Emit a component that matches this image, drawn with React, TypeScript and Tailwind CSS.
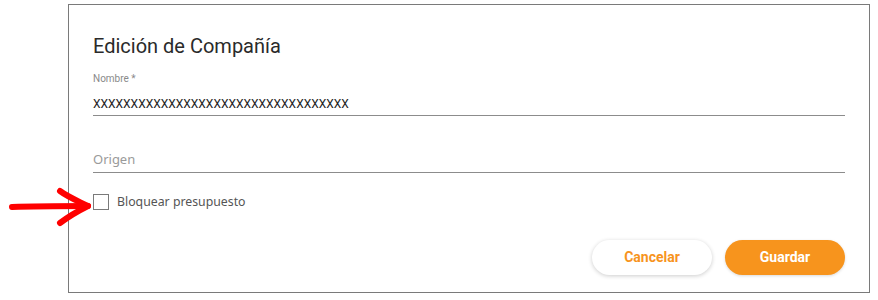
const App = (): JSX.Element => {
  return (
    <div className="relative w-[878px] h-[300px] bg-white" style={{ fontFamily: 'Roboto, "Liberation Sans", sans-serif' }}>
      <div className="ml-[68px] mt-[4px] w-[802px] h-[289px] border border-[#7a7a7a] bg-white">
        <div className="pl-[24px] pr-[24px] pt-[29px]">
          <h2 className="text-[20px] leading-[24px] text-[#2a2a2a]">Edición de Compañía</h2>

          <div className="mt-[15px]">
            <label className="block text-[10px] leading-[12px] text-[#8a8a8a]">Nombre *</label>
            <div className="mt-[10px] pb-[2px] border-b border-[#8c8c8c] text-[12px] leading-[18px] text-[#222]">
              XXXXXXXXXXXXXXXXXXXXXXXXXXXXXXXXXX
            </div>
          </div>

          <div className="mt-[33px] pb-[3px] border-b border-[#8c8c8c] text-[13px] leading-[20px] text-[#9a9a9a]" style={{ fontFamily: '"Noto Sans", "Open Sans", sans-serif' }}>
            Origen
          </div>

          <div className="mt-[20px] flex items-center gap-[8px]">
            <span className="w-[16px] h-[16px] border border-[#7a7a7a] bg-white" />
            <span className="text-[12.3px] leading-[18px] text-[#555]" style={{ fontFamily: '"Noto Sans", "Open Sans", sans-serif' }}>Bloquear presupuesto</span>
          </div>

          <div className="mt-[29px] flex justify-end gap-[13px]">
            <button className="w-[120px] h-[35px] rounded-full bg-white text-[#f7941d] text-[14px] font-bold shadow-[0_1px_4px_rgba(0,0,0,0.2)]">
              Cancelar
            </button>
            <button className="w-[120px] h-[35px] rounded-full bg-[#f7941d] text-white text-[14px] font-bold shadow-[0_1px_3px_rgba(0,0,0,0.15)]">
              Guardar
            </button>
          </div>
        </div>
      </div>

      <svg className="absolute left-[6px] top-[182px]" width="88" height="42" viewBox="0 0 88 42">
        <path d="M6 21 C 30 20, 55 20, 82 20" stroke="#ff0000" strokeWidth="6" strokeLinecap="round" fill="none" />
        <path d="M54 5 C 62 11, 72 15, 82 20 C 72 25, 62 31, 54 37" stroke="#ff0000" strokeWidth="6" strokeLinecap="round" strokeLinejoin="round" fill="none" />
      </svg>
    </div>
  )
}

export default App
